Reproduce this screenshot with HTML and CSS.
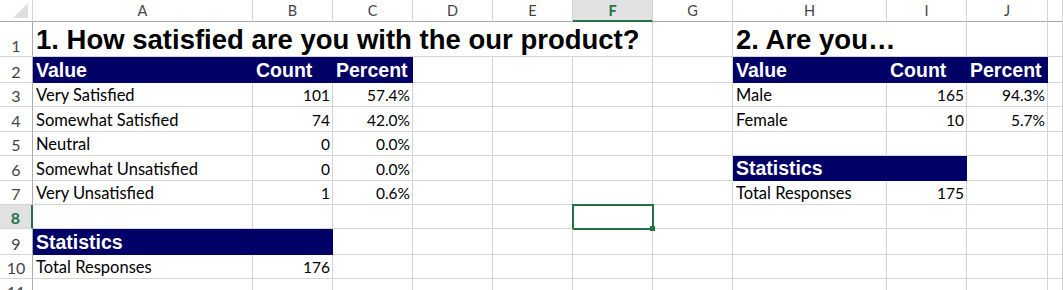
FILE: index.html
```html
<!doctype html>
<html>
<head>
<meta charset="UTF-8">
<title>Survey results</title>
<link rel="stylesheet" href="styles.css">
</head>
<body>
<div class="sheet">
	<!-- column headers -->
	<div class="corner"><span class="tri"></span></div>
	<div class="hd">A</div><div class="hd">B</div><div class="hd">C</div><div class="hd">D</div><div class="hd">E</div>
	<div class="hd on">F</div><div class="hd">G</div><div class="hd">H</div><div class="hd">I</div><div class="hd">J</div><div class="hd"></div>

	<!-- 1 -->
	<div class="rh">1</div>
	<div class="c title span6">1. How satisfied are you with the our product?</div>
	<div class="c"></div>
	<div class="c title span2">2. Are you…</div>
	<div class="c"></div><div class="c"></div>

	<!-- 2 -->
	<div class="rh">2</div>
	<div class="c bar">Value</div><div class="c bar">Count</div><div class="c bar">Percent</div>
	<div class="c"></div><div class="c"></div><div class="c"></div><div class="c"></div>
	<div class="c bar">Value</div><div class="c bar">Count</div><div class="c bar">Percent</div>
	<div class="c"></div>

	<!-- 3 -->
	<div class="rh">3</div>
	<div class="c">Very Satisfied</div><div class="c num">101</div><div class="c num">57.4%</div>
	<div class="c"></div><div class="c"></div><div class="c"></div><div class="c"></div>
	<div class="c">Male</div><div class="c num">165</div><div class="c num">94.3%</div>
	<div class="c"></div>

	<!-- 4 -->
	<div class="rh">4</div>
	<div class="c">Somewhat Satisfied</div><div class="c num">74</div><div class="c num">42.0%</div>
	<div class="c"></div><div class="c"></div><div class="c"></div><div class="c"></div>
	<div class="c">Female</div><div class="c num">10</div><div class="c num">5.7%</div>
	<div class="c"></div>

	<!-- 5 -->
	<div class="rh">5</div>
	<div class="c">Neutral</div><div class="c num">0</div><div class="c num">0.0%</div>
	<div class="c"></div><div class="c"></div><div class="c"></div><div class="c"></div>
	<div class="c"></div><div class="c"></div><div class="c"></div>
	<div class="c"></div>

	<!-- 6 -->
	<div class="rh">6</div>
	<div class="c">Somewhat Unsatisfied</div><div class="c num">0</div><div class="c num">0.0%</div>
	<div class="c"></div><div class="c"></div><div class="c"></div><div class="c"></div>
	<div class="c bar">Statistics</div><div class="c bar"></div><div class="c"></div>
	<div class="c"></div>

	<!-- 7 -->
	<div class="rh">7</div>
	<div class="c">Very Unsatisfied</div><div class="c num">1</div><div class="c num">0.6%</div>
	<div class="c"></div><div class="c"></div><div class="c"></div><div class="c"></div>
	<div class="c">Total Responses</div><div class="c num">175</div><div class="c"></div>
	<div class="c"></div>

	<!-- 8 -->
	<div class="rh on">8</div>
	<div class="c"></div><div class="c"></div><div class="c"></div>
	<div class="c"></div><div class="c"></div><div class="c sel"></div><div class="c"></div>
	<div class="c"></div><div class="c"></div><div class="c"></div>
	<div class="c"></div>

	<!-- 9 -->
	<div class="rh">9</div>
	<div class="c bar">Statistics</div><div class="c bar"></div><div class="c"></div>
	<div class="c"></div><div class="c"></div><div class="c"></div><div class="c"></div>
	<div class="c"></div><div class="c"></div><div class="c"></div>
	<div class="c"></div>

	<!-- 10 -->
	<div class="rh">10</div>
	<div class="c">Total Responses</div><div class="c num">176</div><div class="c"></div>
	<div class="c"></div><div class="c"></div><div class="c"></div><div class="c"></div>
	<div class="c"></div><div class="c"></div><div class="c"></div>
	<div class="c"></div>

	<!-- 11 -->
	<div class="rh">11</div>
	<div class="c"></div><div class="c"></div><div class="c"></div>
	<div class="c"></div><div class="c"></div><div class="c"></div><div class="c"></div>
	<div class="c"></div><div class="c"></div><div class="c"></div>
	<div class="c"></div>
</div>
</body>
</html>
```

FILE: styles.css
```css
*{ margin:0; padding:0; box-sizing:border-box; }
html,body{ overflow:hidden; background:#fff; }
.sheet{ display:grid; grid-template-columns:33px 220px 80px 80px 80px 80px 80px 80px 154px 80px 81px 1fr; grid-template-rows:22px 35px 26px 24px 25px 24px 25px 24px 24px 26px 24px 24px; width:1063px; }

/* headers */
.corner{ border-right:1px solid #d4d4d4; border-bottom:1px solid #ababab; display:flex; align-items:flex-end; justify-content:flex-end; padding:0 4px 3px 0; }
.corner .tri{ width:0; height:0; border-left:15px solid transparent; border-bottom:15px solid #dfdfdf; }
.hd,.rh{ display:flex; align-items:flex-end; justify-content:center; color:#444; padding-bottom:2px; }
.hd{ border-right:1px solid #d4d4d4; border-bottom:1px solid #ababab; font:14.5px/16px Lato, sans-serif; }
.rh{ border-right:1px solid #ababab; border-bottom:1px solid #d4d4d4; font:16px/18px Lato, sans-serif; padding-bottom:1px; }
.hd.on{ background:#e1e1e1; border-bottom:2px solid #217346; color:#217346; font-weight:bold; padding-bottom:1px; }
.rh.on{ background:#e1e1e1; border-right:2px solid #217346; color:#217346; font-weight:bold; }

/* cells */
.c{ border-right:1px solid #d4d4d4; border-bottom:1px solid #d4d4d4; display:flex; align-items:flex-end; padding:0 2px 2px 3px; font:16.5px/18px Lato, sans-serif; color:#000; white-space:nowrap; position:relative; }
.c.num{ justify-content:flex-end; font-size:15.5px; }
.c.title{ font:bold 27.5px/1 "Liberation Sans", Arial, sans-serif; padding-bottom:3px; }
.span6{ grid-column:span 6; }
.span2{ grid-column:span 2; }
.c.bar{ background:#000066; border-color:#000066; color:#fff; font:bold 19.5px/1 "Liberation Sans", Arial, sans-serif; padding-bottom:2px; }
.c.sel:after{ content:''; position:absolute; left:-1px; top:-1px; right:-2px; bottom:-2px; border:2px solid #217346; }
.c.sel:before{ content:''; position:absolute; right:-3px; bottom:-3px; width:5px; height:5px; background:#217346; z-index:1; }
```
